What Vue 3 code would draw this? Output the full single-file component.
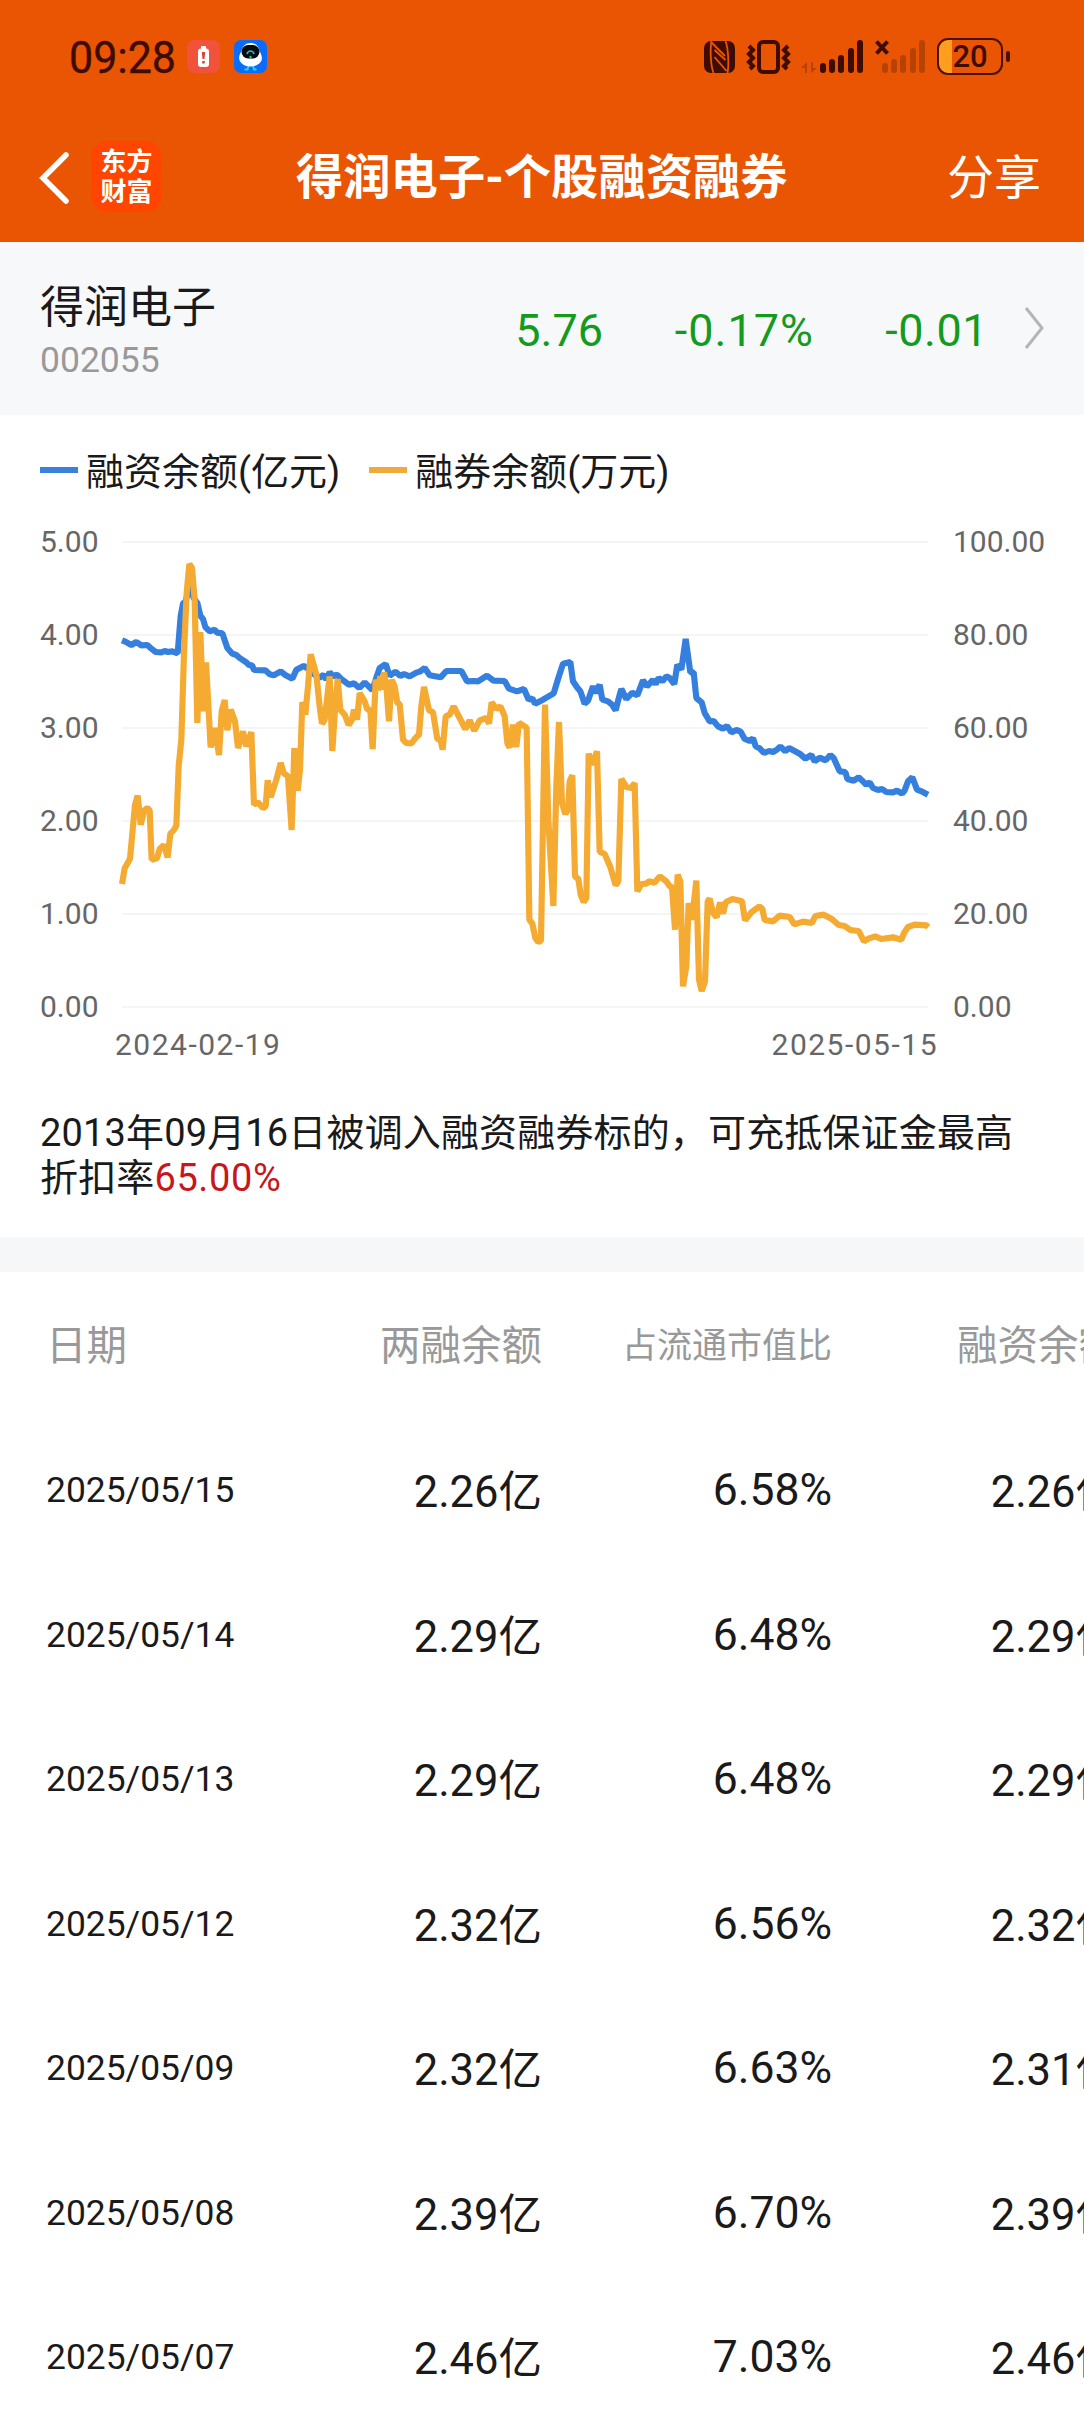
<script setup>
import { computed } from 'vue'

const signalBars = [10, 14, 18, 25, 33]

const leftTicks = ['5.00', '4.00', '3.00', '2.00', '1.00', '0.00']
const rightTicks = ['100.00', '80.00', '60.00', '40.00', '20.00', '0.00']

// each series is three batches: [x offset, 'x,y x,y ...']
const financing = [
  [0, '67,362 77,366 95,376 110,367 125,377 143,376 155,387 168,397 185,398 195,394 205,397 218,395 234,401 243,290 250,252 258,245 270,195 282,235 293,250 302,288 310,298 317,322 330,335 345,330 352,339 368,341 383,385 398,402 410,406 420,415 440,428 448,436 457,437 463,451 497,452 510,464 522,467 543,455 557,466 578,477 590,450 612,439 625,447 640,462 660,474 672,465 680,480 690,458 700,470 712,465 725,478 748,495 763,491 779,505 795,488 818,511 832,468 840,445 858,433 870,468'],
  [810, '77,456 92,469 103,463 120,470 140,459 150,456 165,445 180,467 213,473 230,454 275,454 292,485 312,484 325,485 352,468 372,483 405,484 418,507 442,515 463,508 477,540 488,536 496,552 520,540 552,521 566,475 580,432 602,427 610,485 622,503 632,515 645,552 655,543 670,500 678,520 690,495 698,540 715,545 727,555 738,572 746,540 755,508 770,538 788,519 803,527 820,482 832,500 846,485'],
  [1650, '10,480 18,494 27,474 38,485 50,470 60,475 74,493 83,435 95,450 108,358 122,458 132,458 140,535 156,548 165,580 180,605 192,604 205,620 220,627 232,619 245,638 260,631 273,636 285,658 300,664 310,656 318,680 330,686 343,700 358,694 370,697 382,690 392,680 407,695 418,685 450,702 467,717 485,706 495,725 510,714 528,722 542,706 552,715 570,755 587,757 593,778 612,783 627,773 650,795 660,788 670,805 685,811 697,808 710,817 730,818 742,813 757,822 765,812 775,785 788,773 802,810 818,816 835,825'],
]
const lending = [
  [0, '67,1093 75,1046 91,1017 106,855 114,828 123,915 134,872 143,865 150,872 156,1020 172,1016 180,988 193,976 204,1013 212,942 222,932 230,918 237,740 245,660 253,400 261,220 269,133 277,145 285,240 293,610 302,337 311,575 319,428 333,683 345,625 358,706 366,575 375,541 383,632 393,570 406,605 415,685 430,635 440,680 455,637 463,855 475,848 490,866 498,860 504,782 513,833 530,780 543,730 552,760 565,770 576,931 584,685 594,813 601,750 608,547 617,585 625,500 633,404 650,465 660,560 667,612 675,600 690,470 698,694 706,570 714,478 722,570 735,585 747,616 757,600 763,570 772,600 780,520 795,545 803,570 812,570 819,688 828,480 835,512 842,470 848,510 853,458 860,500 868,605 876,480 885,500 893,550'],
  [810, '90,553 100,660 110,670 125,671 140,652 148,645 155,560 163,502 178,572 190,578 203,658 213,662 219,690 228,590 240,585 252,560 270,595 287,628 300,602 314,633 330,602 350,595 358,612 366,548 380,568 392,560 405,590 413,670 420,684 430,615 440,682 448,610 462,618 471,625 479,1200 488,1212 497,1255 506,1268 514,1262 526,555 536,900 551,1159 560,800 568,607 577,850 587,883 595,870 600,785 608,767 616,1070 626,1078 633,1125 642,1147 650,1135 657,702 668,735 682,695 690,996 705,1003 722,1042 738,1097 746,1085 755,778 770,802 785,805 795,790 803,1115 815,1093 830,1092 838,1085'],
  [1650, '15,1089 30,1070 50,1085 60,1100 67,1102 76,1230 84,1065 92,1085 100,1400 110,1340 117,1150 127,1200 140,1083 148,1380 156,1414 166,1385 174,1145 180,1137 190,1180 201,1193 211,1148 220,1182 228,1148 248,1138 265,1142 277,1145 286,1202 305,1178 330,1160 338,1168 345,1201 370,1205 390,1188 420,1192 434,1214 460,1206 487,1210 497,1189 522,1185 545,1197 567,1216 585,1219 602,1231 627,1234 643,1265 658,1256 677,1250 695,1258 730,1253 755,1260 763,1240 775,1222 795,1215 830,1217 836,1222'],
]

function toPoints(batches) {
  return batches
    .flatMap(([offset, pts]) =>
      pts.split(' ').map((p) => {
        const [x, y] = p.split(',').map(Number)
        return `${x + offset},${y}`
      })
    )
    .join(' ')
}
const financingLine = computed(() => toPoints(financing))
const lendingLine = computed(() => toPoints(lending))

const rows = [
  { date: '2025/05/15', total: '2.26亿', ratio: '6.58%', financing: '2.26亿' },
  { date: '2025/05/14', total: '2.29亿', ratio: '6.48%', financing: '2.29亿' },
  { date: '2025/05/13', total: '2.29亿', ratio: '6.48%', financing: '2.29亿' },
  { date: '2025/05/12', total: '2.32亿', ratio: '6.56%', financing: '2.32亿' },
  { date: '2025/05/09', total: '2.32亿', ratio: '6.63%', financing: '2.31亿' },
  { date: '2025/05/08', total: '2.39亿', ratio: '6.70%', financing: '2.39亿' },
  { date: '2025/05/07', total: '2.46亿', ratio: '7.03%', financing: '2.46亿' },
]
</script>

<template>
  <div class="page">
    <header class="top">
      <div class="status">
        <span class="clock">09:28</span>
        <svg class="app-icon" viewBox="0 0 33 33">
          <rect width="33" height="33" rx="8" fill="#f0523b" />
          <rect x="14" y="6" width="5" height="3" fill="#fff" />
          <rect x="11" y="8.500" width="11" height="18.500" rx="3" fill="#fff" />
          <path d="M14.800 12h3.400l-.7 7h-2zM15.200 21h2.600v2.500h-2.600z" fill="#d94430" />
        </svg>
        <svg class="app-icon robot" viewBox="0 0 33 33">
          <rect width="33" height="33" rx="7" fill="#0a6cfa" />
          <path d="M14.500 26l-1 3.500h-3M19 26l1 3.500h2.500" fill="none" stroke="#20d5e8" stroke-width="2" />
          <path d="M16.500 3c5 0 8 3 9 8 3 5 3 9 1 11-2 3-6 4.500-10 4.500S8.500 25 6.500 22c-2-3-2-6 1-11 1-5 4-8 9-8z" fill="#fff" />
          <rect x="7.500" y="5" width="18" height="13.500" rx="6.700" fill="#050b10" />
          <path d="M13 14c1-4 6-4 7 0" fill="none" stroke="#18c3c8" stroke-width="1.500" />
          <circle cx="16.500" cy="17" r="1.200" fill="#18c3c8" />
        </svg>
        <div class="indicators">
          <svg class="nfc" viewBox="0 0 31 32">
            <rect width="31" height="32" rx="7" />
            <path class="cut" d="M7.500 0C6 8 6.500 24 9.500 32M21.500 0c3 8 3.500 24 2 32" />
            <path class="cut" d="M7 1l14 14M10.500 9v0l11 10M10.500 16v0l12 14" />
          </svg>
          <svg class="vibrate" viewBox="0 0 43 34">
            <rect x="12" y="2" width="19" height="30" rx="4" />
            <path d="M2 6l4 4-4 4 4 4-4 4 4 4-3 3M41 6l-4 4 4 4-4 4 4 4-4 4 3 3" />
          </svg>
          <svg class="updown" viewBox="0 0 16 11">
            <path d="M0 6l6-6v11H4V6zM16 6l-6 5V0h2v6z" />
          </svg>
          <div class="bars">
            <i v-for="(h, i) in signalBars" :key="i" :style="{ height: h + 'px' }"></i>
          </div>
          <div class="bars off">
            <svg class="no-sim" viewBox="0 0 14 15"><path d="M1.500 1.500l11 12M12.500 1.500l-11 12" /></svg>
            <i v-for="(h, i) in signalBars" :key="i" :style="{ height: h + 'px' }"></i>
          </div>
          <div class="battery"><span>20</span></div>
          <i class="battery-tip"></i>
        </div>
      </div>
      <nav class="nav">
        <svg class="back" viewBox="0 0 30 52"><path d="M27 3L4 26l23 23" /></svg>
        <div class="logo"><span>东方</span><span>财富</span></div>
        <h1>得润电子-个股融资融券</h1>
        <span class="share">分享</span>
      </nav>
    </header>

    <section class="stock">
      <div class="stock-id">
        <div class="stock-name">得润电子</div>
        <div class="stock-code">002055</div>
      </div>
      <span class="quote price">5.76</span>
      <span class="quote percent">-0.17%</span>
      <span class="quote change">-0.01</span>
      <svg class="more" viewBox="0 0 20 42"><path d="M2 1l16 20L2 41" /></svg>
    </section>

    <section class="chart-box">
      <div class="legend">
        <i class="blue"></i><span>融资余额(亿元)</span>
        <i class="orange"></i><span>融券余额(万元)</span>
      </div>
      <div class="chart">
        <div class="ticks"><span v-for="t in leftTicks" :key="t">{{ t }}</span></div>
        <svg class="plot" viewBox="67 67 2418 1395">
          <line v-for="n in 6" :key="n" class="grid" x1="67" x2="2485" :y1="67 + (n - 1) * 279" :y2="67 + (n - 1) * 279" />
          <polyline class="line-blue" :points="financingLine" />
          <polyline class="line-orange" :points="lendingLine" />
        </svg>
        <div class="ticks right"><span v-for="t in rightTicks" :key="t">{{ t }}</span></div>
      </div>
      <div class="range"><span>2024-02-19</span><span>2025-05-15</span></div>
      <p class="note">2013年09月16日被调入融资融券标的，可充抵保证金最高折扣率<em>65.00%</em></p>
    </section>

    <div class="gap"></div>

    <section class="table">
      <div class="row head">
        <span>日期</span><span>两融余额</span><span class="small">占流通市值比</span><span>融资余额</span>
      </div>
      <div class="row" v-for="r in rows" :key="r.date">
        <span class="date">{{ r.date }}</span>
        <span>{{ r.total }}</span>
        <span class="ratio">{{ r.ratio }}</span>
        <span>{{ r.financing }}</span>
      </div>
    </section>
  </div>
</template>

<style>
body { margin: 0; background: #fff; }
</style>

<style scoped>
.page {
  width: 1084px;
  height: 2412px;
  overflow: hidden;
  background: #fff;
  color: #1a1a1a;
  font-family: Roboto, "Noto Sans CJK SC", sans-serif;
}
.page svg { display: block; flex: none; overflow: visible; }
.top { height: 242px; background: #e95503; }

.status { display: flex; align-items: center; height: 113px; padding: 0 74px 0 69px; color: #3e0d00; }
.clock {
  width: 118px;
  flex: none;
  font-size: 45px;
  line-height: 50px;
  margin-top: 2px;
  transform: scaleX(0.955);
  transform-origin: left;
  -webkit-text-stroke: 0.4px #3e0d00;
}
.app-icon { width: 33px; height: 33px; }
.app-icon.robot { margin-left: 14px; }
.indicators { display: flex; align-items: center; margin-left: auto; }
.nfc { width: 31px; height: 32px; fill: #3e0d00; }
.nfc .cut { fill: none; stroke: #e95503; stroke-width: 1.800; }
.vibrate { width: 43px; height: 34px; margin-left: 12px; fill: none; stroke: #3e0d00; stroke-width: 4; }
.updown { width: 16px; height: 11px; margin: 21px 3px 0 11px; fill: #b84203; }
.bars { position: relative; display: flex; align-items: flex-end; gap: 3.3px; height: 33px; }
.bars i { width: 6px; border-radius: 3px; background: #3e0d00; }
.bars.off { margin-left: 19px; }
.bars.off i { background: #b84203; }
.no-sim { position: absolute; left: -7px; top: 0; width: 14px; height: 15px; fill: none; stroke: #3e0d00; stroke-width: 4; }
.battery {
  box-sizing: border-box;
  width: 66px;
  height: 37px;
  margin-left: 12px;
  border: 2.5px solid #4a1000;
  border-radius: 11px;
  background: linear-gradient(90deg, #ff9d1c 13px, transparent 13px);
  font-size: 31px;
  font-weight: 500;
  line-height: 33px;
  text-align: center;
}
.battery-tip { width: 4px; height: 11px; margin-left: 3px; border-radius: 2px; background: #4a1000; }

.nav { display: flex; align-items: center; height: 129px; padding: 0 43px 0 39px; box-sizing: border-box; color: #fff; }
.back { width: 30px; height: 52px; fill: none; stroke: #fff; stroke-width: 5.500; stroke-linecap: round; }
.logo {
  display: flex;
  flex-direction: column;
  align-items: center;
  justify-content: center;
  width: 71px;
  height: 71px;
  margin: -2px 0 0 22px;
  border-radius: 16px;
  background: #ff4500;
  font-size: 26px;
  font-weight: 700;
  line-height: 30px;
}
h1 { margin: 1px auto 0 134px; font-size: 47.3px; font-weight: 700; line-height: 60px; white-space: nowrap; }
.share { margin-top: 1px; font-size: 47px; line-height: 60px; }

.stock { display: flex; align-items: center; height: 173px; padding: 0 40px; background: #f7f8fa; }
.stock-id { width: 200px; margin-top: 5px; }
.stock-name { font-size: 44px; line-height: 56px; }
.stock-code { margin-top: 1px; color: #999; font-size: 35.5px; line-height: 46px; }
.quote { margin-top: 3px; color: #149a1c; font-size: 45px; text-align: right; }
.price { width: 363px; }
.percent { width: 211px; letter-spacing: 1px; }
.change { width: 174px; letter-spacing: 0.5px; }
.more { width: 20px; height: 42px; margin: -2px 0 0 auto; fill: none; stroke: #b4b5b7; stroke-width: 3; }

.chart-box { height: 822px; }
.legend { display: flex; align-items: center; box-sizing: border-box; height: 112px; padding: 0 40px; font-size: 38px; }
.legend i { width: 38px; height: 6px; margin: -2px 8px 0 0; }
.legend span { margin: -6px 29px 0 0; }
.legend .blue { background: #3a80dd; }
.legend .orange { background: #f0aa3a; }
.chart { display: flex; height: 495px; color: #666; font-size: 30px; }
.ticks { display: flex; flex-direction: column; justify-content: space-between; box-sizing: border-box; width: 122px; padding-left: 40px; line-height: 30px; }
.ticks.right { width: 156px; padding-left: 25px; }
.plot { width: 806px; height: 465px; margin-top: 15px; }
.grid { stroke: #ebebeb; stroke-width: 3.500; }
.line-blue, .line-orange { fill: none; stroke-width: 18.500; stroke-linejoin: bevel; }
.line-blue { stroke: #3580df; }
.line-orange { stroke: #f5aa31; }
.range { display: flex; justify-content: space-between; padding: 5px 146px 0 115px; color: #666; font-size: 30px; line-height: 36px; letter-spacing: 1.5px; }
.note { margin: 48px 60px 0 40px; font-size: 38px; line-height: 44.6px; letter-spacing: 0.15px; }
.note em { color: #c8161d; font-style: normal; letter-spacing: 0.6px; }

.gap { height: 35px; background: #f6f7f9; }

.row {
  display: grid;
  grid-template-columns: 252px 290px 290px 287px;
  align-items: center;
  width: 1119px;
  height: 144.5px;
  font-size: 43.5px;
  text-align: right;
}
.row span:first-child { padding-left: 46px; text-align: left; white-space: nowrap; }
.row .date { padding-top: 3px; font-size: 35.4px; }
.row .ratio { padding-top: 3px; font-size: 44.5px; }
.head { height: 141px; margin-bottom: 3.5px; color: #999; font-size: 40.5px; }
.head .small { font-size: 35px; }
</style>
